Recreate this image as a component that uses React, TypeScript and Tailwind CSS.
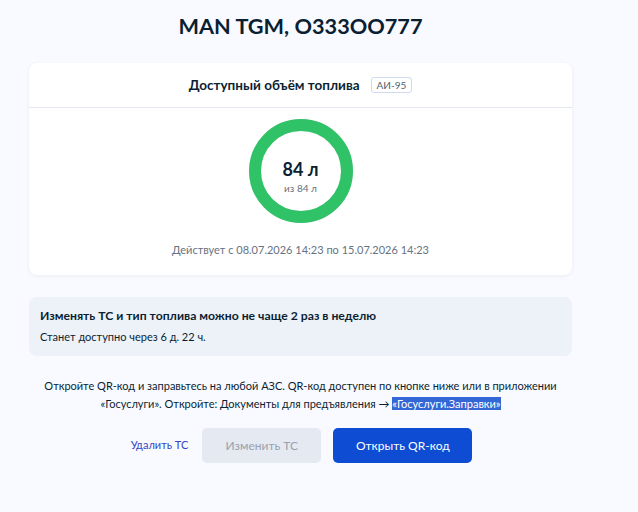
import React from "react";

const FONT = { fontFamily: "Lato, 'Noto Sans', sans-serif" };

function FuelRing({ left, total }: { left: number; total: number }) {
  const r = 46;
  const c = 2 * Math.PI * r;
  const part = total > 0 ? left / total : 0;
  return (
    <div className="relative w-[104px] h-[104px]">
      <svg width="104" height="104" viewBox="0 0 104 104" className="-rotate-90">
        <circle cx="52" cy="52" r={r} fill="none" stroke="#e6ebf3" strokeWidth="12" />
        <circle
          cx="52"
          cy="52"
          r={r}
          fill="none"
          stroke="#2fc266"
          strokeWidth="12"
          strokeDasharray={c}
          strokeDashoffset={c * (1 - part)}
        />
      </svg>
      <div className="absolute inset-0 flex flex-col items-center justify-center pt-[9px]">
        <span className="text-[18px] leading-[22px] font-bold text-[#0b1f33]">{left} л</span>
        <span className="text-[10px] leading-[12px] text-[#66727f] mt-[2px]">из {total} л</span>
      </div>
    </div>
  );
}

export default function App() {
  return (
    <div className="w-[638px] min-h-[512px] bg-[#f8faff]" style={FONT}>
      <div className="ml-[29px] w-[543px] pt-[12px] pb-[40px]">
        <h1 className="text-center text-[21.7px] leading-[28px] font-bold text-[#0b1f33]">MAN TGM, O333OO777</h1>

        <div className="mt-[23px] bg-white rounded-[8px] shadow-[0_1px_4px_rgba(11,31,51,0.06)]">
          <div className="h-[45px] flex items-center justify-center gap-[11px] border-b border-[#e3e7ee]">
            <span className="text-[13.5px] font-bold text-[#0b1f33]">Доступный объём топлива</span>
            <span className="h-[16px] px-[5px] flex items-center rounded-[3px] border border-[#cfdaf0] text-[10px] text-[#535f6c]">
              АИ-95
            </span>
          </div>
          <div className="flex flex-col items-center pt-[11px] pb-[17px]">
            <FuelRing left={84} total={84} />
            <p className="mt-[19px] text-[11px] leading-[16px] text-[#66727f]">
              Действует с 08.07.2026 14:23 по 15.07.2026 14:23
            </p>
          </div>
        </div>

        <div className="mt-[22px] rounded-[8px] bg-[#edf1f8] px-[11px] pt-[10px] pb-[11px]">
          <p className="text-[12.2px] leading-[18px] font-bold text-[#0b1f33]">
            Изменять ТС и тип топлива можно не чаще 2 раз в неделю
          </p>
          <p className="mt-[4px] text-[11px] leading-[16px] text-[#0b1f33]">Станет доступно через 6 д. 22 ч.</p>
        </div>

        <p className="mt-[21px] text-center text-[11px] leading-[18px] text-[#0b1f33]">
          Откройте QR-код и заправьтесь на любой АЗС. QR-код доступен по кнопке ниже или в приложении
          <br />
          «Госуслуги». Откройте: Документы для предъявления →{" "}
          <span className="bg-[#3367d6] text-white">«Госуслуги.Заправки»</span>
        </p>

        <div className="mt-[15px] flex items-center justify-center gap-[12px]">
          <button className="px-[2px] text-[11px] text-[#3545c8]">Удалить ТС</button>
          <button className="w-[119px] h-[35px] rounded-[5px] bg-[#e4e9f2] text-[12px] text-[#9aa2ad]">
            Изменить ТС
          </button>
          <button className="w-[139px] h-[35px] rounded-[5px] bg-[#0d4cd3] text-[12px] text-white">
            Открыть QR-код
          </button>
        </div>
      </div>
    </div>
  );
}
